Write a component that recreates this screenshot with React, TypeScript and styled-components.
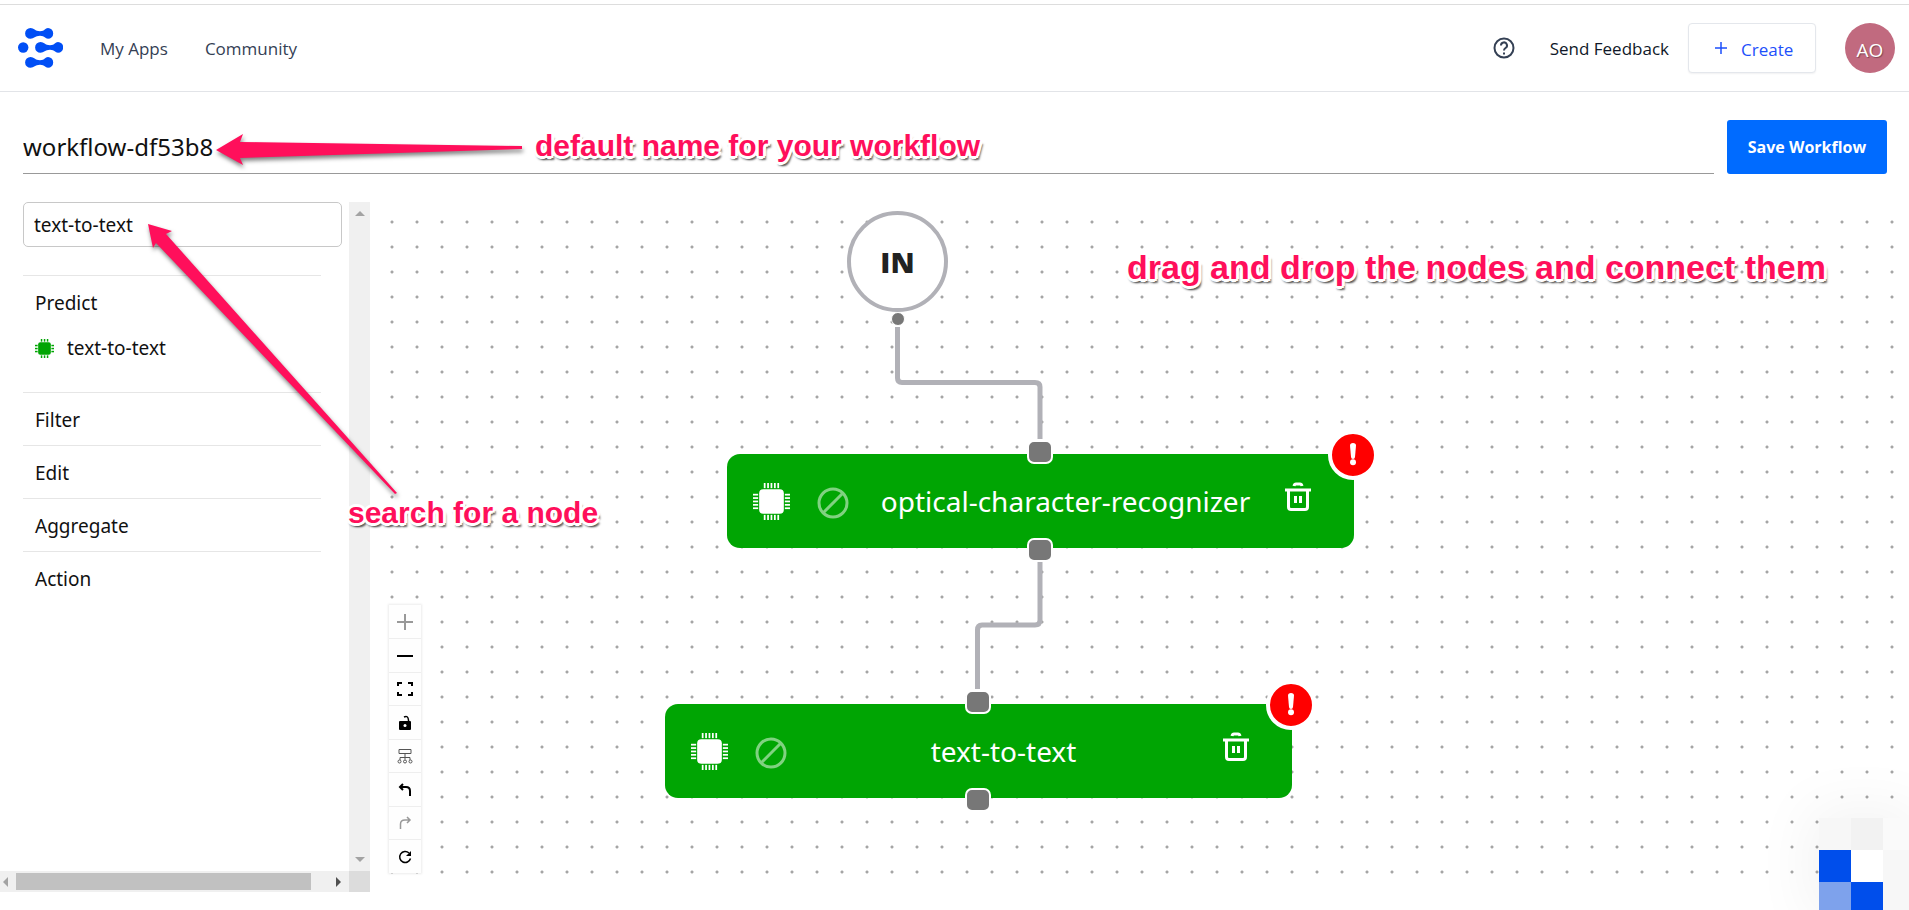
import React from 'react';
import styled, { createGlobalStyle } from 'styled-components';

const ui = '"Open Sans", "Noto Sans", sans-serif';

const GlobalStyle = createGlobalStyle`
  *, *::before, *::after { box-sizing: border-box; }
  body { margin: 0; background: #fff; color: #111; font-family: "Noto Sans", sans-serif; font-size: 19px; overflow: hidden; }
  button, input { font: inherit; color: inherit; margin: 0; }
  button { cursor: pointer; }
  svg { display: block; }
`;

const Page = styled.div`
  position: relative;
  display: flex;
  flex-direction: column;
  height: 100vh;
  padding-top: 4px;
  padding-bottom: 18px;
  overflow: hidden;
`;

const Header = styled.header`
  flex: none;
  height: 88px;
  display: flex;
  align-items: center;
  padding: 0 14px 0 18px;
  border-top: 1px solid #ddd;
  border-bottom: 1px solid #e2e4e8;
`;

const Logo = styled.a`
  margin-right: 37px;
`;

const Nav = styled.nav`
  display: flex;
  gap: 37px;
  flex: 1;
`;

const TextLink = styled.a<{ $dark?: boolean }>`
  padding-top: 2px;
  font-family: ${ui};
  font-size: 17px;
  line-height: 24px;
  font-weight: 500;
  color: ${p => (p.$dark ? '#101828' : '#344054')};
  text-decoration: none;
`;

const HelpButton = styled.button`
  border: 0;
  padding: 0;
  background: none;
  margin-right: 34px;
`;

const CreateButton = styled.button`
  display: flex;
  align-items: center;
  gap: 14px;
  width: 128px;
  height: 50px;
  margin: 0 29px 0 19px;
  padding: 2px 0 0 26px;
  border: 1px solid #e4e7ec;
  border-radius: 4px;
  background: #fff;
  box-shadow: 0 1px 2px rgba(16, 24, 40, 0.06);
  color: #1d4ffb;
  font-family: ${ui};
  font-size: 17px;
  font-weight: 500;
`;

const Avatar = styled.div`
  width: 50px;
  height: 50px;
  border-radius: 50%;
  background: #c16a7f;
  color: #fff;
  font-family: ${ui};
  font-size: 19px;
  line-height: 54px;
  text-align: center;
  text-shadow: 1px 1px 1px rgba(0, 0, 0, 0.35);
`;

const TitleBar = styled.div`
  flex: none;
  display: flex;
  gap: 13px;
  padding: 28px 22px 28px 23px;
`;

const TitleInput = styled.input`
  flex: 1;
  min-width: 0;
  height: 54px;
  padding: 0;
  border: 0;
  border-bottom: 1px solid #999;
  background: none;
  font-size: 24px;
  outline: none;
`;

const SaveButton = styled.button`
  width: 160px;
  height: 54px;
  padding: 0;
  border: 0;
  border-radius: 3px;
  background: #006bff;
  color: #fff;
  font-family: ${ui};
  font-size: 16px;
  font-weight: 700;
`;

const Workspace = styled.main`
  flex: 1;
  min-height: 0;
  display: flex;
`;

const Sidebar = styled.aside`
  flex: none;
  width: 370px;
  display: grid;
  grid-template-columns: 1fr 21px;
  grid-template-rows: 1fr 21px;
`;

const Palette = styled.div`
  padding: 0 7px 0 23px;
  overflow: hidden;
`;

const SearchInput = styled.input`
  display: block;
  width: 100%;
  height: 45px;
  padding: 0 10px;
  border: 1px solid #c8c8c8;
  border-radius: 5px;
  outline: none;
`;

const Groups = styled.div`
  margin: 28px 21px 0 0;
`;

const Group = styled.section`
  padding: 15px 12px 12px;
  border-top: 1px solid #e6e6e6;
  line-height: 25px;
`;

const GroupTitle = styled.h2<{ $open?: boolean }>`
  margin: 0 0 ${p => (p.$open ? 20 : 0)}px;
  font-size: 19px;
  line-height: 25px;
  font-weight: 400;
`;

const PaletteItem = styled.div`
  display: flex;
  gap: 13px;
  padding-bottom: 19px;
`;

const PaletteIcon = styled.span`
  padding-top: 3px;
  color: #00a503;
`;

const Track = styled.div<{ $vertical?: boolean }>`
  display: flex;
  flex-direction: ${p => (p.$vertical ? 'column' : 'row')};
  align-items: center;
  justify-content: space-between;
  padding: ${p => (p.$vertical ? '9px 0' : '0 8px 0 3px')};
  background: #f0f0f0;
`;

const Thumb = styled.div`
  width: 295px;
  height: 17px;
  margin: 0 auto 0 8px;
  background: #c1c1c1;
`;

const Corner = styled.div`
  background: #dcdcdc;
`;

const Canvas = styled.div`
  position: relative;
  flex: 1;
  min-width: 0;
  overflow: hidden;
  background-image: radial-gradient(circle at 2px 2px, #999 0, #aaa 1px, transparent 2px);
  background-size: 25px 25px;
  background-position: 20px 18px;
`;

const Edges = styled.svg`
  position: absolute;
  left: 0;
  top: 0;
`;

const InputNode = styled.div`
  position: absolute;
  left: 477px;
  top: 9px;
  width: 101px;
  height: 101px;
  border: 4px solid #b1b1b7;
  border-radius: 50%;
  background: #fff;
  color: #222;
  font-family: ${ui};
  font-size: 29px;
  line-height: 93px;
  font-weight: 800;
  text-align: center;
`;

const RoundPort = styled.span`
  position: absolute;
  left: 521px;
  top: 110px;
  width: 14px;
  height: 14px;
  border: 1px solid #fff;
  border-radius: 50%;
  background: #777;
`;

const Node = styled.div<{ $x: number; $y: number }>`
  position: absolute;
  left: ${p => p.$x}px;
  top: ${p => p.$y}px;
  width: 627px;
  height: 94px;
  display: grid;
  grid-template-columns: 38px 32px 1fr 32px;
  align-items: center;
  padding: 0 38px 0 26px;
  border-radius: 13px;
  background: #00a503;
  color: #fff;
`;

const NodeName = styled.span`
  padding-left: 24px;
  font-size: 28px;
  line-height: 38px;
  text-align: center;
`;

const NodeIcon = styled.span<{ $push?: number }>`
  margin-left: ${p => p.$push ?? 0}px;
`;

const TrashButton = styled.button`
  padding: 0 0 8px;
  border: 0;
  background: none;
`;

const Port = styled.span<{ $bottom?: boolean }>`
  position: absolute;
  left: 300px;
  ${p => (p.$bottom ? 'bottom: -14px' : 'top: -14px')};
  width: 26px;
  height: 24px;
  border: 2px solid #fff;
  border-radius: 7px;
  background: #777;
`;

const Alert = styled.span`
  position: absolute;
  right: -24px;
  top: -24px;
  width: 50px;
  height: 50px;
  border: 4px solid #fff;
  border-radius: 50%;
  background: #f00;
`;

const Controls = styled.div`
  position: absolute;
  left: 19px;
  bottom: 19px;
  width: 32px;
  background: #fefefe;
  box-shadow: 0 0 2px 1px rgba(0, 0, 0, 0.08);
`;

const ControlButton = styled.button<{ $muted?: boolean }>`
  display: grid;
  place-items: center;
  width: 32px;
  height: 33px;
  padding: 0;
  border: 0;
  background: none;
  color: ${p => (p.$muted ? '#999' : '#000')};
  & + & { border-top: 1px solid #eee; }
  &:nth-child(even) { height: 34px; }
`;

const Note = styled.p<{ $x: number; $y: number; $size?: number }>`
  position: absolute;
  left: ${p => p.$x}px;
  top: ${p => p.$y}px;
  margin: 0;
  color: #ff0f5b;
  font: bold ${p => p.$size ?? 30}px/36px "Liberation Sans", Arial, sans-serif;
  white-space: nowrap;
  text-shadow:
    -3px 0 #fff, 3px 0 #fff, 0 -3px #fff, 0 3px #fff,
    -2px -2px #fff, 2px 2px #fff, -2px 2px #fff, 2px -2px #fff,
    3px 4px 2px rgba(0, 0, 0, 0.6), 0 4px 2px rgba(0, 0, 0, 0.4);
`;

const Arrows = styled.svg`
  position: absolute;
  left: 0;
  top: 0;
  pointer-events: none;
  filter: drop-shadow(1px 3px 2px rgba(0, 0, 0, 0.5));
`;

const Badge = styled.div`
  position: absolute;
  right: 0;
  bottom: 0;
  width: 90px;
  height: 92px;
  display: grid;
  grid-template-columns: 32px 32px 26px;
  grid-template-rows: 32px 32px 28px;
  box-shadow: 0 0 60px 10px rgba(0, 0, 0, 0.05);
`;

const Cell = styled.span<{ $c: string }>`
  background: ${p => p.$c};
`;

const LogoMark = () => (
  <svg width="45" height="40" viewBox="0 0 45 40" fill="#004ef5" aria-label="Home">
    {[[7, 0], [17, 14], [7, 29]].map(([x, y]) => (
      <path key={`${x}-${y}`} transform={`translate(${x} ${y})`} d="M5.5 0C9 0 10 3.200 15 3.200S20 0 23 0a5.200 5.400 0 0 1 0 10.800C20 10.800 20 7.800 15 7.800S9 10.800 5.500 10.800a5.400 5.400 0 0 1 0-10.800Z" />
    ))}
    <circle cx="5.200" cy="19.500" r="5.200" />
  </svg>
);

const Chip = ({ size, pins, pinWidth }: { size: number; pins: number[]; pinWidth: number }) => (
  <svg width={size} height={size} viewBox="0 0 36 36" fill="currentColor">
    <rect x="6" y="6" width="24" height="24" rx="4" />
    {pins.map(p => (
      <React.Fragment key={p}>
        <rect x={p} y="0" width={pinWidth} height="5" />
        <rect x={p} y="31" width={pinWidth} height="5" />
        <rect y={p} x="0" width="5" height={pinWidth} />
        <rect y={p} x="31" width="5" height={pinWidth} />
      </React.Fragment>
    ))}
  </svg>
);

const FlowNode = ({ name, x, y }: { name: string; x: number; y: number }) => (
  <Node $x={x} $y={y}>
    <NodeIcon><Chip size={37} pins={[10.5, 13.800, 17.100, 20.400, 23.700]} pinWidth={1.7} /></NodeIcon>
    <NodeIcon $push={26}>
      <svg width="32" height="40" viewBox="0 0 32 40" fill="none" stroke="#80d281" strokeWidth="3">
        <circle cx="16" cy="22" r="14" /><path d="M6 32 26 12" />
      </svg>
    </NodeIcon>
    <NodeName>{name}</NodeName>
    <TrashButton aria-label={`Delete ${name}`}>
      <svg width="28" height="30" viewBox="0 0 28 30" fill="none" stroke="currentColor" strokeWidth="3">
        <path d="M1 8H27M4.500 8V25Q4.500 27.500 7 27.500H21Q23.500 27.500 23.500 25V8M10 4Q10.500 2 12 2H16Q17.500 2 18 4" />
        <path d="M11.500 14V21M16.500 14V21" />
      </svg>
    </TrashButton>
    <Port />
    <Port $bottom />
    <Alert role="img" aria-label="Error">
      <svg width="42" height="42" viewBox="0 0 42 42" fill="#fff">
        <path d="M18 11.500Q18 9 21 9T24 11.500L23 23Q22.800 25 21 25T19 23Z" /><circle cx="21" cy="28.300" r="3" />
      </svg>
    </Alert>
  </Node>
);

const Icon = ({ children }: { children: React.ReactNode }) => (
  <svg width="16" height="16" viewBox="0 0 16 16" fill="none" stroke="currentColor" strokeWidth="2">{children}</svg>
);

export default function App() {
  return (
    <>
      <GlobalStyle />
      <Page>
        <Header>
          <Logo href="#"><LogoMark /></Logo>
          <Nav>
            <TextLink href="#">My Apps</TextLink>
            <TextLink href="#">Community</TextLink>
          </Nav>
          <HelpButton aria-label="Help">
            <svg width="24" height="24" viewBox="0 0 24 24" fill="none" stroke="#344054" strokeWidth="2">
              <circle cx="12" cy="12" r="9.500" /><path d="M9 9.500A3 3 0 1 1 13.500 12Q12 13 12 14.500M12 16.500V18.500" />
            </svg>
          </HelpButton>
          <TextLink href="#" $dark>Send Feedback</TextLink>
          <CreateButton>
            <svg width="12" height="16" viewBox="0 0 12 16" stroke="currentColor" strokeWidth="1.500"><path d="M0 7H12M6 1V13" /></svg>
            Create
          </CreateButton>
          <Avatar>AO</Avatar>
        </Header>

        <TitleBar>
          <TitleInput aria-label="Workflow name" defaultValue="workflow-df53b8" />
          <SaveButton>Save Workflow</SaveButton>
        </TitleBar>

        <Workspace>
          <Sidebar>
            <Palette>
              <SearchInput aria-label="Search nodes" defaultValue="text-to-text" />
              <Groups>
                <Group>
                  <GroupTitle $open>Predict</GroupTitle>
                  <PaletteItem>
                    <PaletteIcon><Chip size={19} pins={[11, 16.700, 22.400]} pinWidth={2.8} /></PaletteIcon>
                    text-to-text
                  </PaletteItem>
                </Group>
                {['Filter', 'Edit', 'Aggregate', 'Action'].map(g => (
                  <Group key={g}><GroupTitle>{g}</GroupTitle></Group>
                ))}
              </Groups>
            </Palette>
            <Track $vertical>
              <svg width="10" height="5" fill="#a3a3a3"><path d="M0 5 5 0 10 5Z" /></svg>
              <svg width="10" height="5" fill="#a3a3a3"><path d="M0 0 5 5 10 0Z" /></svg>
            </Track>
            <Track>
              <svg width="5" height="10" fill="#a3a3a3"><path d="M5 0 0 5 5 10Z" /></svg>
              <Thumb />
              <svg width="5" height="10" fill="#505050"><path d="M0 0 5 5 0 10Z" /></svg>
            </Track>
            <Corner />
          </Sidebar>

          <Canvas>
            <Edges width="1000" height="600" fill="none" stroke="#b1b1b7" strokeWidth="5">
              <path d="M527.500 125V176Q527.500 180.500 532 180.500H665Q670 180.500 670 185V237" />
              <path d="M670 360V418Q670 423 665 423H612Q607.500 423 607.500 428V487" />
            </Edges>
            <InputNode>IN</InputNode>
            <RoundPort />
            <FlowNode name="optical-character-recognizer" x={357} y={252} />
            <FlowNode name="text-to-text" x={295} y={502} />
            <Controls>
              <ControlButton $muted aria-label="Zoom in"><Icon><path d="M0 8H16M8 0V16" /></Icon></ControlButton>
              <ControlButton aria-label="Zoom out"><Icon><path d="M0 8H16" /></Icon></ControlButton>
              <ControlButton aria-label="Fit view"><Icon><path d="M1 5V2H5M11 2H15V5M15 11V14H11M5 14H1V11" /></Icon></ControlButton>
              <ControlButton aria-label="Unlock"><Icon><path d="M7 2Q11 0 11.500 5V7" strokeWidth="1.500" /><path d="M3 7H13V14H3Z" fill="currentColor" strokeLinejoin="round" /><circle cx="8" cy="10.500" r="1.500" fill="#fff" stroke="none" /></Icon></ControlButton>
              <ControlButton aria-label="Auto layout"><Icon><path stroke="#555" strokeWidth="1" d="M2 1.500H14V5.500H2ZM8 5.500V11.500M3 12V9.500H13V12" /><g stroke="#555" strokeWidth="1"><circle cx="2.500" cy="13.500" r="1.500" /><circle cx="8" cy="13.500" r="1.500" /><circle cx="13.500" cy="13.500" r="1.500" /></g></Icon></ControlButton>
              <ControlButton aria-label="Undo"><Icon><path d="M6 2 3 5 6 8M3 5H9Q13 5 13 9V14" /></Icon></ControlButton>
              <ControlButton $muted aria-label="Redo"><Icon><path strokeWidth="1.500" d="M10 2 13 5 10 8M13 5H8Q3.500 5 3.500 9V14" /></Icon></ControlButton>
              <ControlButton aria-label="Reset"><Icon><path strokeWidth="1.500" d="M13.500 9.500A5.500 5.500 0 1 1 12 4" /><path d="M14 2V7H9Z" fill="currentColor" stroke="none" /></Icon></ControlButton>
            </Controls>
          </Canvas>
        </Workspace>

        <Note $x={535} $y={128}>default name for your workflow</Note>
        <Note $x={348} $y={495}>search for a node</Note>
        <Note $x={1127} $y={249} $size={34}>drag and drop the nodes and connect them</Note>
        <Arrows width="600" height="510" fill="#ff0f5b">
          <path d="M216 150 243 134 240 142 522 146V149L240 158 243 165Z" />
          <path d="M148 224 172 231 166 234 397 493 395 494 156 243 153 248Z" />
        </Arrows>
        <Badge aria-hidden="true">
          {['#f7f7f7', '#f2f2f2', '#fafafa', '#004eeb', '#fff', '#f7f7f7', '#7ea2ec', '#004eeb', '#f7f7f7'].map((c, i) => <Cell key={i} $c={c} />)}
        </Badge>
      </Page>
    </>
  );
}
